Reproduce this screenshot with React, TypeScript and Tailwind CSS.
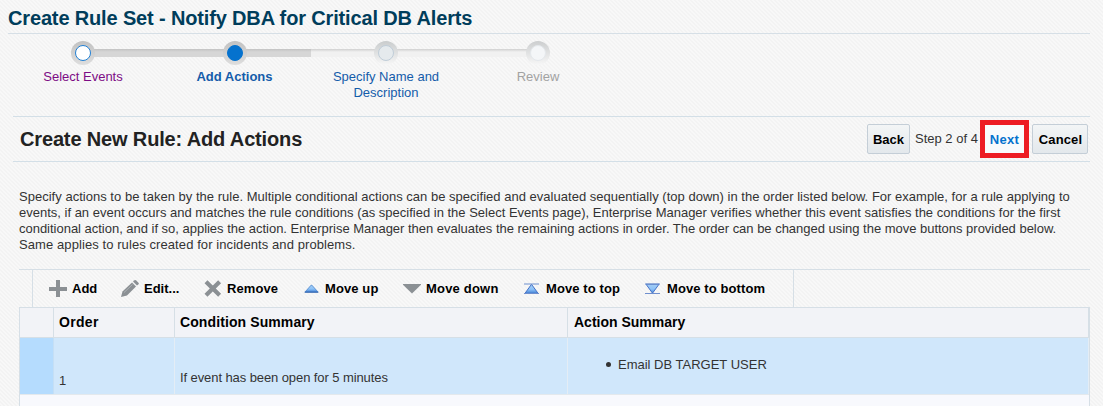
import React from "react";

const steps = [
  { label: "Select Events", cls: "text-[#7d0c85]", state: "visited" },
  { label: "Add Actions", cls: "font-bold text-[#145caa]", state: "current" },
  { label: "Specify Name and Description", cls: "text-[#145caa]", state: "next" },
  { label: "Review", cls: "text-[#a2a2a2]", state: "disabled" },
];

function Dot({ state }: { state: string }) {
  const ring =
    state === "visited" || state === "current"
      ? "bg-linear-to-b from-[#c2c2c2] to-[#dedede]"
      : state === "next"
        ? "bg-linear-to-b from-[#c9cccd] to-[#f7f7f7]"
        : "bg-linear-to-b from-[#cccecf] to-[#f7f7f7]";
  const core =
    state === "visited"
      ? "border-[#2180d4] bg-white"
      : state === "current"
        ? "border-[#0572ce] bg-[#0572ce]"
        : state === "next"
          ? "border-[#c0cdd8] bg-[#e5eaed]"
          : "border-[#e4e8ec] bg-[#f4f6f8]";
  return (
    <div className={`relative flex size-6 items-center justify-center rounded-full ${ring}`}>
      <div className={`size-4 rounded-full border ${core}`} />
    </div>
  );
}

const grey = "#8b9094";

function Icon({ name }: { name: string }) {
  switch (name) {
    case "add":
      return (
        <svg width="18" height="18" viewBox="0 0 18 18" shapeRendering="crispEdges">
          <path d="M7 0h4v7h7v4h-7v6H7v-6H0V7h7z" fill={grey} />
        </svg>
      );
    case "edit":
      return (
        <svg width="18" height="18" viewBox="0 0 18 18">
          <path d="M0 17l1.5-5.5L11 2.5l4 4L6 15.5z" fill={grey} />
          <path d="M12 1.6L13.6.2q.8-.5 1.6.2l2.3 2.3q.7.8 0 1.6L16 5.6z" fill={grey} />
          <path d="M3 12.5L11.5 4.5" stroke="#aeb2b5" strokeWidth="1" />
        </svg>
      );
    case "remove":
      return (
        <svg width="18" height="18" viewBox="0 0 18 18">
          <path d="M2 1.8l13.6 13.4M15.6 1.8L2 15.2" stroke={grey} strokeWidth="4.2" />
        </svg>
      );
    case "up":
      return (
        <svg width="16" height="18" viewBox="0 0 16 18">
          <path d="M1 12L7.2 5.1h.6L14 12z" fill="url(#up)" stroke="#4f87cc" strokeWidth=".8" strokeLinejoin="round" />
          <path d="M.6 12.2h13.8" stroke="#2f62ae" strokeWidth="1" />
        </svg>
      );
    case "down":
      return (
        <svg width="18" height="18" viewBox="0 0 18 18">
          <path d="M0 4h18v.7L9 13.5 0 4.7z" fill={grey} />
        </svg>
      );
    case "top":
      return (
        <svg width="16" height="18" viewBox="0 0 16 18">
          <path d="M1 13.3L7.5 4.3l6.5 9z" fill="url(#up)" stroke="#4672c6" strokeWidth="1" />
          <path d="M0 4h15M0 13.5h15" stroke="#6f8fce" strokeWidth="1.2" />
        </svg>
      );
    default:
      return (
        <svg width="16" height="18" viewBox="0 0 16 18">
          <path d="M1 4.2h13l-6.5 9z" fill="url(#up)" stroke="#4672c6" strokeWidth="1" />
          <path d="M0 4h15M0 13.5h15" stroke="#6f8fce" strokeWidth="1.2" />
        </svg>
      );
  }
}

const tools = [
  { icon: "add", label: "Add", cls: "w-[72px] gap-[5px]" },
  { icon: "edit", label: "Edit...", cls: "w-[83px] gap-[5px]" },
  { icon: "remove", label: "Remove", cls: "w-[100px] gap-[5px] tracking-[0.1px]" },
  { icon: "up", label: "Move up", cls: "w-[99px] gap-[5px] tracking-[0.1px]" },
  { icon: "down", label: "Move down", cls: "w-[121px] gap-[5px] tracking-[0.2px]" },
  { icon: "top", label: "Move to top", cls: "w-[121px] gap-[6px] tracking-[0.1px]" },
  { icon: "bottom", label: "Move to bottom", cls: "gap-[6px] tracking-[0.1px]" },
];

const paragraph = [
  { text: "Specify actions to be taken by the rule. Multiple conditional actions can be specified and evaluated sequentially (top down) in the order listed below. For example, for a rule applying to", cls: "tracking-[0.02px]" },
  { text: "events, if an event occurs and matches the rule conditions (as specified in the Select Events page), Enterprise Manager verifies whether this event satisfies the conditions for the first", cls: "" },
  { text: "conditional action, and if so, applies the action. Enterprise Manager then evaluates the remaining actions in order. The order can be changed using the move buttons provided below.", cls: "-tracking-[0.018px]" },
  { text: "Same applies to rules created for incidents and problems.", cls: "tracking-[0.085px]" },
];

export default function App() {
  return (
    <div className="h-[406px] w-[1103px] overflow-hidden bg-[#f7f7f7] bg-[repeating-linear-gradient(45deg,#f3f3f3_0px,#f3f3f3_0.7px,#f8f8f8_1.4px,#f8f8f8_2.1px,#f3f3f3_2.8284px)] font-['Liberation_Sans',Arial,sans-serif] text-[13px] leading-4 whitespace-nowrap text-[#333]">
      <svg width="0" height="0" className="absolute">
        <linearGradient id="up" x1="0" y1="0" x2="0" y2="1">
          <stop offset="0" stopColor="#a5cdf3" />
          <stop offset="0.55" stopColor="#8cc2f8" />
          <stop offset="1" stopColor="#4583d6" />
        </linearGradient>
      </svg>

      <header className="mr-[13px] ml-2 h-[34px] border-b border-[#d6dfe6] pt-[6px]">
        <h1 className="text-[20px] leading-6 font-bold tracking-[-0.15px] text-[#003d5b]">Create Rule Set - Notify DBA for Critical DB Alerts</h1>
      </header>

      <div className="relative ml-[7px] flex h-[82px] w-[608px] pt-[7px]">
        <div className="absolute top-[15px] left-[76px] flex h-2 w-[456px]">
          <div className="w-[228px] bg-[linear-gradient(#c3c3c3,#d6d6d6_3px)]" />
          <div className="w-[228px] bg-[linear-gradient(#d0d0d0,#f1f1f1_3px)]" />
        </div>
        {steps.map((s, i) => (
          <div key={s.label} className={`flex flex-col items-center ${i === 1 ? "w-[151px]" : "w-[152px]"}`}>
            <Dot state={s.state} />
            <span className={`mt-1 w-[120px] text-center whitespace-normal ${s.cls}`}>{s.label}</span>
          </div>
        ))}
      </div>

      <div className="mr-[13px] ml-[13px] flex h-[46px] items-center border-y border-[#d3dfe7] pl-[7px]">
        <h2 className="flex-1 text-[20px] leading-6 font-bold tracking-[-0.15px] text-[#222]">Create New Rule: Add Actions</h2>
        <button className="h-[30px] w-[43px] rounded-[2px] border border-[#c4ced7] bg-linear-to-b from-[#f3f5f6] to-[#e3e8ec] pt-px font-bold text-black">Back</button>
        <span className="w-[70px] pl-[5px]">Step 2 of 4</span>
        <button className="h-[38px] w-[49px] border-[5px] border-[#ed1c24] bg-[#f9fafc] pt-px font-bold tracking-[0.3px] text-[#0572ce]">Next</button>
        <button className="ml-[3px] mr-[2px] h-[30px] w-[56px] rounded-[2px] border border-[#c4ced7] bg-linear-to-b from-[#f3f5f6] to-[#e3e8ec] pt-px pl-px font-bold tracking-[0.15px] text-black">Cancel</button>
      </div>

      <div className="mt-[27px] ml-[19px] h-20">
        {paragraph.map((l) => (
          <p key={l.text} className={l.cls}>{l.text}</p>
        ))}
      </div>

      <div className="ml-[19px] w-[1071px]">
        <div className="flex h-[38px] border-t border-[#d6dfe6] pl-[13px]">
          <div className="flex w-[762px] items-center border-x border-[#d6dfe6] pl-4 font-bold text-black">
            {tools.map((t) => (
              <div key={t.icon} className={`flex items-center ${t.cls}`}>
                <Icon name={t.icon} />
                <span>{t.label}</span>
              </div>
            ))}
          </div>
        </div>
        <div className="h-[120px] border border-[#d6dfe6] bg-[#f8f9fd]">
          <div className="grid h-[30px] grid-cols-[34px_121px_393px_521px] border-b border-[#d6dfe6] bg-[#f2f3f7] text-[14px] leading-[29px] font-bold text-black">
            <div className="border-r border-[#d6dfe6]" />
            <div className="border-r border-[#d6dfe6] pl-[5px] tracking-[0.3px]">Order</div>
            <div className="border-r border-[#d6dfe6] pl-[5px] tracking-[0.1px]">Condition Summary</div>
            <div className="border-r border-[#d6dfe6] pl-[6px]">Action Summary</div>
          </div>
          <div className="grid h-[57px] grid-cols-[34px_121px_393px_521px] border-b border-[#e4e9ed] bg-[#d0e7fb]">
            <div className="border-r border-[#c5dff5] bg-[#b5dcfe]" />
            <div className="border-r border-[#e4edf5] pt-[35px] pl-[5px]">1</div>
            <div className="border-r border-[#e4edf5] pt-[32px] pl-[5px] tracking-[-0.09px]">If event has been open for 5 minutes</div>
            <div className="flex items-start border-r border-[#e4edf5] pt-[19px] pl-[38px]">
              <span className="mt-[5px] mr-[7px] size-[5px] rounded-full bg-[#333]" />
              <span>Email DB TARGET USER</span>
            </div>
          </div>
        </div>
      </div>
    </div>
  );
}
